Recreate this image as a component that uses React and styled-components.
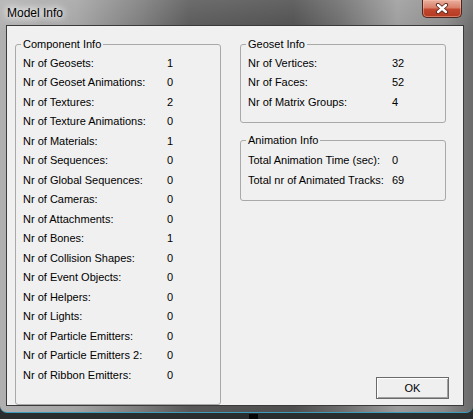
import React from "react";
import styled, { createGlobalStyle } from "styled-components";

const GlobalStyle = createGlobalStyle`
  html, body {
    margin: 0;
    padding: 0;
    overflow: hidden;
    background: #2a2d2e;
  }
  body {
    font-family: "Liberation Sans", Arial, sans-serif;
  }
`;

const componentInfo = [
  ["Nr of Geosets:", 1],
  ["Nr of Geoset Animations:", 0],
  ["Nr of Textures:", 2],
  ["Nr of Texture Animations:", 0],
  ["Nr of Materials:", 1],
  ["Nr of Sequences:", 0],
  ["Nr of Global Sequences:", 0],
  ["Nr of Cameras:", 0],
  ["Nr of Attachments:", 0],
  ["Nr of Bones:", 1],
  ["Nr of Collision Shapes:", 0],
  ["Nr of Event Objects:", 0],
  ["Nr of Helpers:", 0],
  ["Nr of Lights:", 0],
  ["Nr of Particle Emitters:", 0],
  ["Nr of Particle Emitters 2:", 0],
  ["Nr of Ribbon Emitters:", 0],
];

const geosetInfo = [
  ["Nr of Vertices:", 32],
  ["Nr of Faces:", 52],
  ["Nr of Matrix Groups:", 4],
];

const animationInfo = [
  ["Total Animation Time (sec):", 0],
  ["Total nr of Animated Tracks:", 69],
];

const Screen = styled.div`
  width: 473px;
  height: 419px;
  display: flex;
  flex-direction: column;
  background: #2a2d2e;
`;

const Window = styled.div`
  height: 413px;
  box-sizing: border-box;
  display: flex;
  flex-direction: column;
  padding: 0 9px 6px 6px;
  border-bottom: 1px solid #3f9bbd;
  border-radius: 0 0 7px 7px;
  background:
    linear-gradient(180deg, rgba(255,255,255,0.12) 0%, rgba(0,0,0,0) 8%),
    linear-gradient(90deg, #b0b0b0 0%, #a4a4a4 16%, #7a7a7a 30%, #585858 40%, #4e4e4e 62%, #6c6c6c 72%, #9c9c9c 84%, #8a8a8a 94%, #6a6a6a 100%);
`;

const TitleBar = styled.div`
  height: 25px;
  display: flex;
  justify-content: space-between;
  align-items: flex-start;
  flex-shrink: 0;
`;

const Title = styled.div`
  margin: 6px 0 0 1px;
  font-size: 12px;
  line-height: 14px;
  color: #000;
  text-shadow: 0 0 6px #fff, 0 0 10px #fff, 0 0 14px rgba(255,255,255,0.9);
`;

const CloseButton = styled.div`
  width: 40px;
  height: 18px;
  margin-right: 2px;
  box-sizing: border-box;
  display: flex;
  align-items: center;
  justify-content: center;
  border: 1px solid #4a2620;
  border-top: none;
  border-radius: 0 0 5px 5px;
  background: linear-gradient(180deg, #eab0a0 0%, #d98069 45%, #c2472e 55%, #b33a22 100%);
  box-shadow: inset 0 0 0 1px rgba(255, 200, 180, 0.45);
`;

const Content = styled.div`
  flex: 1;
  display: grid;
  grid-template-columns: 206px 206px;
  column-gap: 19px;
  align-items: stretch;
  padding: 12px 0 0 8px;
  background: #f0f0f0;
  border: 1px solid #3a3a3a;
`;

const GroupBox = styled.fieldset`
  margin: ${(p) => p.$gap || 0}px 0 0 0;
  padding: 0 0 ${(p) => p.$bottom}px 7px;
  border: 1px solid #a9a9a9;
  border-radius: 3px;
  min-width: 0;
`;

const Legend = styled.legend`
  margin-left: -2px;
  padding: 0 2px;
  font-size: 11px;
  line-height: 13px;
  color: #000;
`;

const Rows = styled.div`
  padding-top: ${(p) => p.$top}px;
`;

const Row = styled.div`
  display: grid;
  grid-template-columns: 144px auto;
  height: 19.5px;
  align-items: center;
  font-size: 11px;
  color: #000;
  white-space: nowrap;
`;

const Column = styled.div`
  display: flex;
  flex-direction: column;
`;

const OkButton = styled.button`
  margin: auto -3px 6px 0;
  align-self: flex-end;
  width: 73px;
  height: 22px;
  box-sizing: border-box;
  font-family: "Liberation Sans", Arial, sans-serif;
  font-size: 11px;
  color: #000;
  background: #efefef;
  border: 1px solid #6a6a6a;
  box-shadow: inset 1px 1px 0 #fff, inset -1px -1px 0 #a0a0a0;
  padding: 0;
`;

const Desktop = styled.div`
  flex: 1;
  display: flex;
`;

const DesktopItem = styled.div`
  width: 9px;
  margin-left: 249px;
  margin-top: 1px;
  background: #050505;
`;

function InfoGroup({ title, items, top = 2, bottom = 10, gap }) {
  return (
    <GroupBox $bottom={bottom} $gap={gap}>
      <Legend>{title}</Legend>
      <Rows $top={top}>
        {items.map(([label, value]) => (
          <Row key={label}>
            <span>{label}</span>
            <span>{value}</span>
          </Row>
        ))}
      </Rows>
    </GroupBox>
  );
}

export default function App() {
  return (
    <Screen>
      <GlobalStyle />
      <Window>
        <TitleBar>
          <Title>Model Info</Title>
          <CloseButton>
            <svg width="14" height="11" viewBox="0 0 14 11">
              <path d="M3 2 L11 9 M11 2 L3 9" stroke="#5a2418" strokeWidth="4.2" strokeLinecap="round" />
              <path d="M3 2 L11 9 M11 2 L3 9" stroke="#fff" strokeWidth="2.4" strokeLinecap="round" />
            </svg>
          </CloseButton>
        </TitleBar>
        <Content>
          <InfoGroup title="Component Info" items={componentInfo} bottom={10} />
          <Column>
            <InfoGroup title="Geoset Info" items={geosetInfo} bottom={10} />
            <InfoGroup title="Animation Info" items={animationInfo} top={4} bottom={10} gap={11} />
            <OkButton>OK</OkButton>
          </Column>
        </Content>
      </Window>
      <Desktop>
        <DesktopItem />
      </Desktop>
    </Screen>
  );
}
